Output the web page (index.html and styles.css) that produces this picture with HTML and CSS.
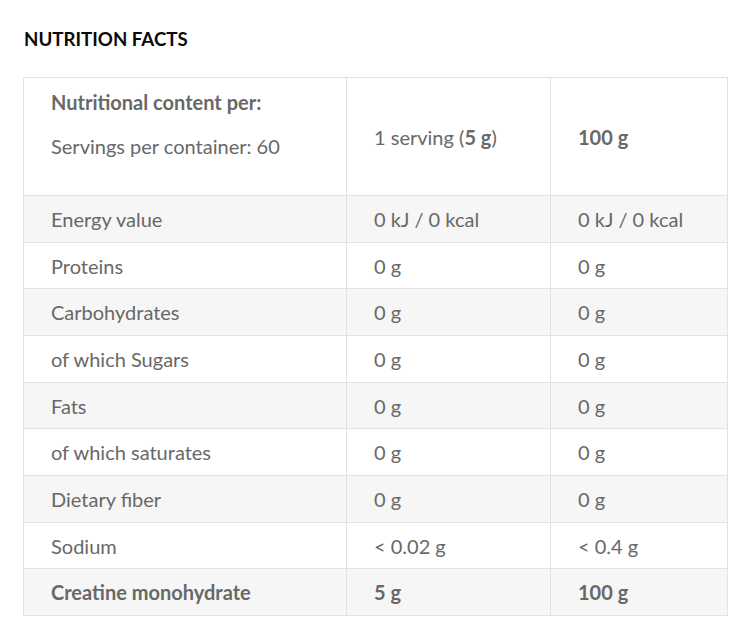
FILE: index.html
```html
<!DOCTYPE html>
<html lang="en">
<head>
<meta charset="utf-8">
<title>Nutrition facts</title>
<link rel="stylesheet" href="styles.css">
</head>
<body>
<section class="facts">
  <h2 class="facts-title">NUTRITION FACTS</h2>
  <table class="facts-table">
    <thead>
      <tr class="head-row">
        <th class="col-name">
          <p class="head-strong">Nutritional content per:</p>
          <p class="head-sub">Servings per container: 60</p>
        </th>
        <th class="col-serv">1 serving (<b>5 g</b>)</th>
        <th class="col-100"><b>100 g</b></th>
      </tr>
    </thead>
    <tbody>
      <tr><td>Energy value</td><td>0 kJ / 0 kcal</td><td>0 kJ / 0 kcal</td></tr>
      <tr><td>Proteins</td><td>0 g</td><td>0 g</td></tr>
      <tr><td>Carbohydrates</td><td>0 g</td><td>0 g</td></tr>
      <tr><td>of which Sugars</td><td>0 g</td><td>0 g</td></tr>
      <tr><td>Fats</td><td>0 g</td><td>0 g</td></tr>
      <tr><td>of which saturates</td><td>0 g</td><td>0 g</td></tr>
      <tr><td>Dietary fiber</td><td>0 g</td><td>0 g</td></tr>
      <tr><td>Sodium</td><td>&lt; 0.02 g</td><td>&lt; 0.4 g</td></tr>
      <tr class="total-row"><td>Creatine monohydrate</td><td>5 g</td><td>100 g</td></tr>
    </tbody>
  </table>
</section>
</body>
</html>
```

FILE: styles.css
```css
html, body {
  margin: 0;
  padding: 0;
  background: #ffffff;
}

body {
  font-family: "Lato", "Open Sans", sans-serif;
  color: #686868;
}

.facts {
  padding: 29px 23px 0 23px;
}

.facts-title {
  margin: 0 0 28px 1px;
  font-size: 18.7px;
  line-height: 20px;
  font-weight: 700;
  color: #0a0a0a;
}

.facts-table {
  width: 705px;
  border-collapse: collapse;
  font-size: 20px;
  table-layout: fixed;
}

.facts-table th,
.facts-table td {
  box-sizing: border-box;
  border: 1px solid #e2e2e2;
  text-align: left;
  padding: 0 10px 0 27px;
  font-weight: 400;
  line-height: 26px;
  white-space: nowrap;
}

.col-name { width: 323px; }
.col-serv { width: 204px; }

.head-row th {
  height: 118px;
  vertical-align: middle;
}

.head-row th.col-name {
  vertical-align: top;
  padding-top: 11px;
}

.head-strong {
  margin: 0;
  font-weight: 700;
}

.head-sub {
  margin: 18px 0 0 0;
}

.facts-table b {
  font-weight: 700;
}

.facts-table tbody td {
  height: 46.68px;
  padding-top: 0;
  padding-bottom: 0;
}

.facts-table tbody tr:nth-child(odd) {
  background: #f6f6f6;
}

.total-row td {
  font-weight: 700;
}
```
